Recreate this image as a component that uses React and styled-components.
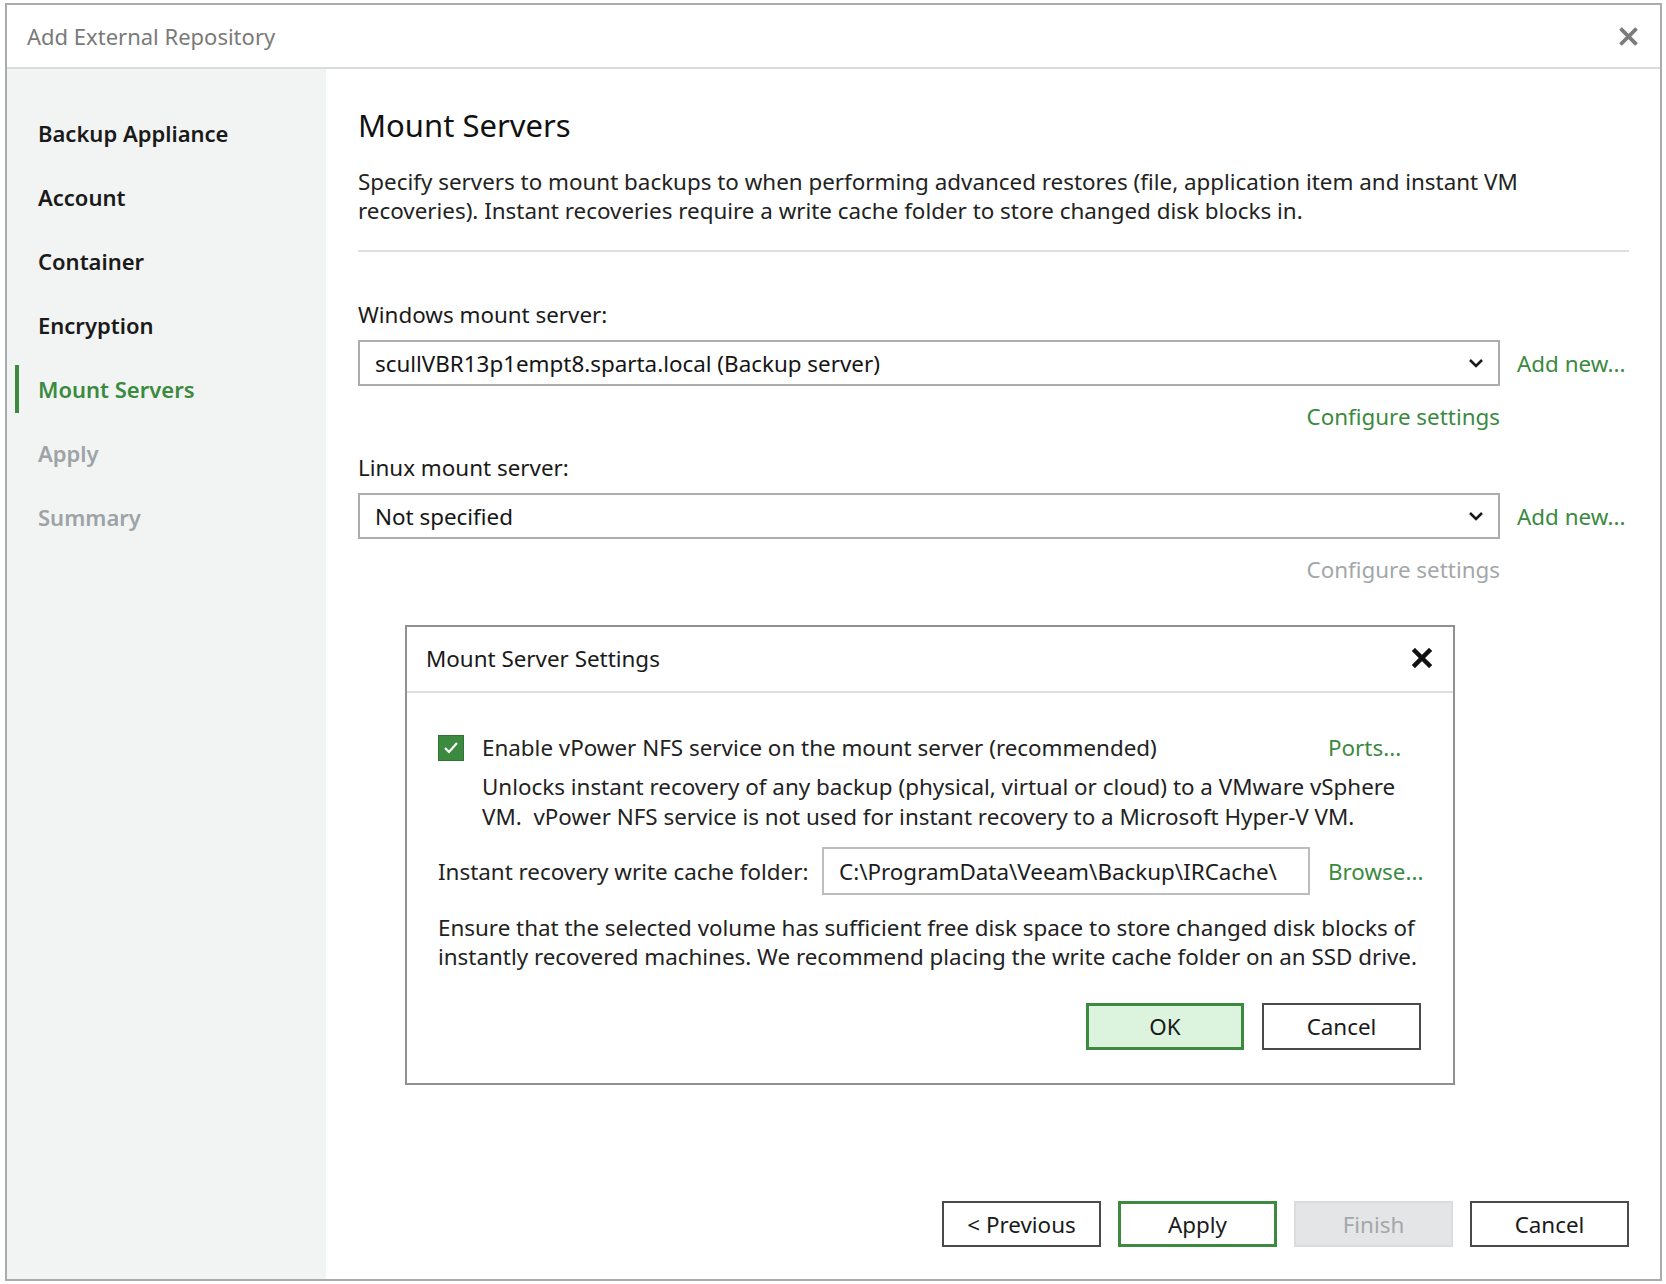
import React from 'react'
import styled, { createGlobalStyle } from 'styled-components'

const GREEN = '#3b8a40'
const FONT = `"Noto Sans", "Open Sans", "Liberation Sans", sans-serif`

const GlobalStyle = createGlobalStyle`
  html, body { margin: 0; padding: 0; background: #fff; }
  body { font-family: ${FONT}; color: #1c1c1c; font-stretch: semi-condensed; }
  * { box-sizing: border-box; }
`

const Window = styled.div`
  position: relative;
  margin: 3px 0 0 5px;
  width: 1657px;
  height: 1278px;
  border: 2px solid #a9abad;
  display: flex;
  flex-direction: column;
  background: #fff;
`

const TitleBar = styled.div`
  height: 64px;
  flex: none;
  display: flex;
  align-items: center;
  justify-content: space-between;
  padding: 0 22px 0 20px;
  border-bottom: 2px solid #d9dbdc;
`

const TitleText = styled.span`
  font-size: 22px;
  color: #7a7a7a;
`

const CloseIcon = styled.svg`
  display: block;
  width: ${p => p.$size}px;
  height: ${p => p.$size}px;
  color: ${p => p.$color};
`

const Body = styled.div`
  flex: 1;
  display: flex;
  min-height: 0;
`

const Sidebar = styled.nav`
  width: 319px;
  flex: none;
  background: #f2f4f3;
  padding-top: 40px;
  display: flex;
  flex-direction: column;
  gap: 16px;
`

const NavItem = styled.div`
  height: 48px;
  margin-left: 8px;
  padding-left: 19px;
  border-left: 4px solid ${p => (p.$active ? GREEN : 'transparent')};
  display: flex;
  align-items: center;
  font-size: 22px;
  font-weight: 600;
  color: ${p => (p.$active ? GREEN : p.$disabled ? '#9ea3a6' : '#1a1a1a')};
`

const Main = styled.main`
  flex: 1;
  display: flex;
  flex-direction: column;
  padding: 38px 31px 32px 32px;
`

const Heading = styled.h1`
  margin: 0;
  font-size: 31px;
  line-height: 36px;
  font-weight: 400;
  color: #111;
`

const Text = styled.p`
  margin: ${p => p.$mt || 0}px 0 0;
  padding-left: ${p => p.$indent || 0}px;
  font-size: 22.4px;
  line-height: ${p => p.$lh || 29}px;
  color: ${p => p.$color || '#222'};
  white-space: nowrap;
`

const Divider = styled.hr`
  margin: 25px 0 0;
  border: 0;
  height: 2px;
  background: #dcdedf;
`

const FieldRow = styled.div`
  margin-top: ${p => p.$mt}px;
  display: grid;
  grid-template-columns: minmax(0, 1fr) 112px;
  column-gap: 17px;
  align-items: center;
`

const Combo = styled.div`
  height: 46px;
  border: 2px solid #adadad;
  background: #fff;
  display: flex;
  align-items: center;
  justify-content: space-between;
  padding: 0 14px 0 15px;
  font-size: 22.4px;
  color: #151515;
`

const Link = styled.span`
  font-size: 22.4px;
  line-height: 29px;
  color: ${p => (p.$muted ? '#a3a7aa' : GREEN)};
  white-space: nowrap;
  text-align: ${p => p.$align || 'left'};
`

const ButtonRow = styled.div`
  margin-top: ${p => (p.$auto ? 'auto' : `${p.$mt}px`)};
  display: flex;
  justify-content: flex-end;
  gap: ${p => p.$gap}px;
`

const Button = styled.button`
  width: ${p => p.$w || 159}px;
  height: ${p => p.$h || 46}px;
  font-family: ${FONT};
  font-stretch: semi-condensed;
  font-size: 22.4px;
  padding: 0;
  color: ${p => (p.$variant === 'disabled' ? '#a3a7aa' : '#1a1a1a')};
  background: ${p =>
    p.$variant === 'disabled' ? '#e3e5e6' : p.$variant === 'ok' ? '#dcf4dd' : '#fff'};
  border: ${p =>
    p.$variant === 'primary' || p.$variant === 'ok'
      ? `3px solid ${GREEN}`
      : p.$variant === 'disabled'
      ? '2px solid #dadcdd'
      : '2px solid #4a4a4a'};
`

const Modal = styled.section`
  position: absolute;
  left: 398px;
  top: 620px;
  width: 1050px;
  height: 460px;
  border: 2px solid #8f9193;
  background: #fff;
  display: flex;
  flex-direction: column;
`

const ModalHeader = styled.div`
  height: 66px;
  flex: none;
  border-bottom: 2px solid #dcdfe0;
  display: flex;
  align-items: center;
  justify-content: space-between;
  padding: 0 21px 2px 19px;
  font-size: 22.4px;
  color: #1a1a1a;
`

const ModalBody = styled.div`
  padding: 40px 32px 32px 31px;
`

const OptionRow = styled.div`
  display: grid;
  grid-template-columns: 26px minmax(0, 1fr) 93px;
  column-gap: 18px;
  align-items: center;
  height: 29px;
`

const CheckBox = styled.span`
  width: 26px;
  height: 26px;
  background: ${GREEN};
  border: 1px solid #2f7434;
  display: flex;
  align-items: center;
  justify-content: center;
`

const FolderRow = styled.div`
  margin-top: 15px;
  display: grid;
  grid-template-columns: minmax(0, 1fr) 488px 93px;
  column-gap: 18px;
  align-items: center;
`

const PathInput = styled.div`
  height: 48px;
  border: 2px solid #bdbdbd;
  display: flex;
  align-items: center;
  padding-left: 15px;
  font-size: 22.4px;
  white-space: nowrap;
  overflow: hidden;
`

const Chevron = () => (
  <svg width="16" height="10" viewBox="0 0 16 10">
    <polyline points="2,2 8,8 14,2" fill="none" stroke="#1a1a1a" strokeWidth="2.6" />
  </svg>
)

const Cross = ({ size, color, stroke }) => (
  <CloseIcon $size={size} $color={color} viewBox="0 0 20 20">
    <path d="M3 3 L17 17 M17 3 L3 17" stroke="currentColor" strokeWidth={stroke} strokeLinecap="square" />
  </CloseIcon>
)

const steps = [
  { label: 'Backup Appliance' },
  { label: 'Account' },
  { label: 'Container' },
  { label: 'Encryption' },
  { label: 'Mount Servers', active: true },
  { label: 'Apply', disabled: true },
  { label: 'Summary', disabled: true },
]

export default function App() {
  return (
    <>
      <GlobalStyle />
      <Window>
        <TitleBar>
          <TitleText>Add External Repository</TitleText>
          <Cross size={19} color="#7b7b7b" stroke={4} />
        </TitleBar>
        <Body>
          <Sidebar>
            {steps.map(s => (
              <NavItem key={s.label} $active={s.active} $disabled={s.disabled}>
                {s.label}
              </NavItem>
            ))}
          </Sidebar>
          <Main>
            <Heading>Mount Servers</Heading>
            <Text $mt={24}>
              Specify servers to mount backups to when performing advanced restores (file, application item and instant VM
              <br />
              recoveries). Instant recoveries require a write cache folder to store changed disk blocks in.
            </Text>
            <Divider />

            <Text $mt={48} $color="#1a1a1a">Windows mount server:</Text>
            <FieldRow $mt={11}>
              <Combo>
                <span>scullVBR13p1empt8.sparta.local (Backup server)</span>
                <Chevron />
              </Combo>
              <Link>Add new...</Link>
            </FieldRow>
            <FieldRow $mt={16}>
              <Link $align="right">Configure settings</Link>
            </FieldRow>

            <Text $mt={22} $color="#1a1a1a">Linux mount server:</Text>
            <FieldRow $mt={11}>
              <Combo>
                <span>Not specified</span>
                <Chevron />
              </Combo>
              <Link>Add new...</Link>
            </FieldRow>
            <FieldRow $mt={16}>
              <Link $align="right" $muted>Configure settings</Link>
            </FieldRow>

            <ButtonRow $auto $gap={17}>
              <Button>&lt; Previous</Button>
              <Button $variant="primary">Apply</Button>
              <Button $variant="disabled">Finish</Button>
              <Button>Cancel</Button>
            </ButtonRow>
          </Main>
        </Body>

        <Modal>
          <ModalHeader>
            <span>Mount Server Settings</span>
            <Cross size={20} color="#111" stroke={4.5} />
          </ModalHeader>
          <ModalBody>
            <OptionRow>
              <CheckBox>
                <svg width="16" height="14" viewBox="0 0 16 14">
                  <polyline points="2,7 6,11 14,2" fill="none" stroke="#fff" strokeWidth="2.2" />
                </svg>
              </CheckBox>
              <Text>Enable vPower NFS service on the mount server (recommended)</Text>
              <Link>Ports...</Link>
            </OptionRow>
            <Text $mt={10} $indent={44} $lh={30}>
              Unlocks instant recovery of any backup (physical, virtual or cloud) to a VMware vSphere
              <br />
              VM.&nbsp; vPower NFS service is not used for instant recovery to a Microsoft Hyper-V VM.
            </Text>
            <FolderRow>
              <Text>Instant recovery write cache folder:</Text>
              <PathInput>C:\ProgramData\Veeam\Backup\IRCache\</PathInput>
              <Link>Browse...</Link>
            </FolderRow>
            <Text $mt={18}>
              Ensure that the selected volume has sufficient free disk space to store changed disk blocks of
              <br />
              instantly recovered machines. We recommend placing the write cache folder on an SSD drive.
            </Text>
            <ButtonRow $mt={32} $gap={18}>
              <Button $variant="ok" $w={158} $h={47}>OK</Button>
              <Button $w={159} $h={47}>Cancel</Button>
            </ButtonRow>
          </ModalBody>
        </Modal>
      </Window>
    </>
  )
}
